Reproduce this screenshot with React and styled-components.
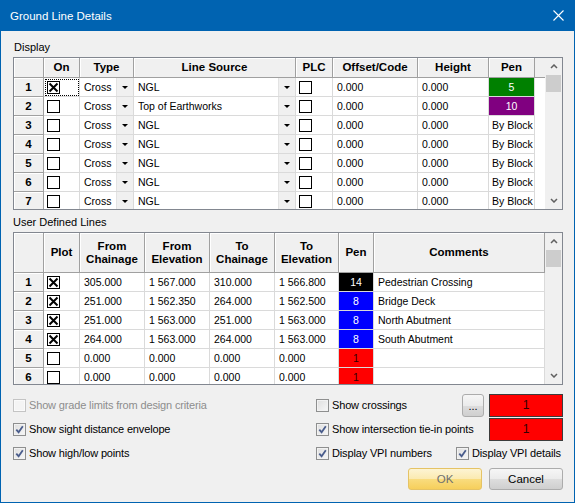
import React from 'react';
import styled, { createGlobalStyle } from 'styled-components';

const GlobalStyle = createGlobalStyle`
  html, body {
    margin: 0;
    padding: 0;
    background: #f0f0f0;
  }
  body {
    font-family: "Liberation Sans", Arial, sans-serif;
    font-size: 10.5px;
    color: #000;
  }
  * {
    box-sizing: border-box;
  }
`;

const Window = styled.div`
  width: 575px;
  height: 503px;
  display: flex;
  flex-direction: column;
  background: #f0f0f0;
  border: 1px solid #0063b1;
  border-top: none;
`;
const TitleBar = styled.div`
  height: 31px;
  margin: 0 -1px;
  padding: 0 11px 0 10px;
  display: flex;
  align-items: center;
  justify-content: space-between;
  background: #0063b1;
  color: #fff;
  font-size: 11.5px;
`;
const Body = styled.div`
  flex: 1;
  display: flex;
  flex-direction: column;
  padding: 0 11px 0 12px;
`;
const SectionLabel = styled.div`
  height: 14px;
  line-height: 14px;
  font-size: 11px;
  margin-top: ${({ $top }) => $top}px;
  padding-left: ${({ $indent }) => $indent || 0}px;
`;
const Frame = styled.div`
  height: 153px;
  margin-top: 3px;
  display: flex;
  border: 1px solid #828790;
  background: #fff;
  overflow: hidden;
`;
const Table = styled.div`
  flex: 1;
  display: grid;
  grid-template-columns: ${({ $cols }) => $cols};
  grid-template-rows: ${({ $head }) => $head}px;
  grid-auto-rows: 19px;
  overflow: hidden;
`;
const Cell = styled.div`
  display: flex;
  align-items: center;
  justify-content: ${({ $center }) => ($center ? 'center' : 'flex-start')};
  padding: 0 ${({ $pad }) => ($pad === undefined ? 4 : $pad)}px;
  border-right: 1px solid #dadada;
  border-bottom: 1px solid #dadada;
  background: ${({ $bg }) => $bg || '#fff'};
  color: ${({ $fg }) => $fg || '#000'};
  white-space: nowrap;
  overflow: hidden;
  outline: ${({ $focus }) => ($focus ? '1px dotted #000' : 'none')};
  outline-offset: -2px;
`;
const FillCell = styled.div`
  background: ${({ $head }) => ($head ? '#f0f0f0' : '#fff')};
  border-bottom: ${({ $head }) => ($head ? '1px solid #a0a0a0' : 'none')};
`;
const HeadCell = styled.div`
  display: flex;
  align-items: center;
  justify-content: center;
  text-align: center;
  font-weight: bold;
  font-size: 11.5px;
  line-height: 13px;
  background: #f0f0f0;
  border-right: 1px solid #a0a0a0;
  border-bottom: 1px solid #a0a0a0;
  box-shadow: inset 1px 1px 0 #fff;
  white-space: nowrap;
  overflow: hidden;
`;
const ComboCell = styled.div`
  display: flex;
  align-items: stretch;
  border-right: 1px solid #dadada;
  border-bottom: 1px solid #dadada;
  background: #fff;
  overflow: hidden;
`;
const ComboText = styled.span`
  flex: 1;
  display: flex;
  align-items: center;
  padding-left: 4px;
  white-space: nowrap;
`;
const DropButton = styled.span`
  width: 17px;
  display: flex;
  align-items: center;
  justify-content: center;
  background: #f0f0f0;
  border-left: 1px solid #e3e3e3;
  &::after {
    content: '';
    border-left: 3px solid transparent;
    border-right: 3px solid transparent;
    border-top: 3px solid #000;
  }
`;
const GridBox = styled.span`
  width: 13px;
  height: 13px;
  display: flex;
  align-items: center;
  justify-content: center;
  border: 1px solid #000;
  background: #fff;
`;
const ScrollBar = styled.div`
  width: 17px;
  flex-shrink: 0;
  display: flex;
  flex-direction: column;
  background: #f0f0f0;
`;
const ScrollArrow = styled.div`
  height: 17px;
  display: flex;
  align-items: center;
  justify-content: center;
`;
const Thumb = styled.div`
  height: 17px;
  margin: 0 1px;
  background: #cdcdcd;
`;
const Track = styled.div`
  flex: 1;
`;
const Options = styled.div`
  margin-top: 8px;
  display: grid;
  grid-template-columns: 303px 1fr;
  grid-auto-rows: 24px;
  font-size: 11px;
`;
const OptionRow = styled.div`
  display: flex;
  align-items: center;
`;
const CheckLabel = styled.label`
  display: flex;
  align-items: center;
  gap: 3px;
  width: ${({ $width }) => ($width ? `${$width}px` : 'auto')};
  flex: ${({ $grow }) => ($grow ? 1 : 'none')};
  color: ${({ $disabled }) => ($disabled ? '#8d8d8d' : '#000')};
  white-space: nowrap;
  letter-spacing: -0.15px;
`;
const ThemedBox = styled.span`
  width: 13px;
  height: 13px;
  display: flex;
  align-items: center;
  justify-content: center;
  border: 1px solid ${({ $disabled }) => ($disabled ? '#c4c4c4' : '#8e8f8f')};
  background: ${({ $disabled }) =>
    $disabled ? '#f4f4f4' : 'linear-gradient(135deg, #dedede 0%, #f7f7f7 100%)'};
  box-shadow: inset 0 0 0 1px ${({ $disabled }) => ($disabled ? '#fafafa' : '#f2f2f2')};
`;
const DotsButton = styled.button`
  width: 22px;
  height: 23px;
  padding: 0 0 4px;
  margin-right: 5px;
  display: flex;
  align-items: flex-end;
  justify-content: center;
  font-family: inherit;
  font-size: 11px;
  border: 1px solid #acacac;
  border-radius: 3px;
  background: linear-gradient(#f6f6f6 0%, #ebebeb 50%, #dddddd 51%, #cfcfcf 100%);
`;
const PenSwatch = styled.div`
  width: 74px;
  height: 23px;
  display: flex;
  align-items: center;
  justify-content: center;
  background: #ff0000;
  border: 1px solid #3c3c3c;
  color: #300;
  font-size: 12px;
`;
const ButtonRow = styled.div`
  margin-top: 3px;
  display: flex;
  justify-content: flex-end;
  gap: 7px;
`;
const DialogButton = styled.button`
  width: 74px;
  height: 22px;
  padding: 0;
  font-family: inherit;
  font-size: 11.5px;
  border-radius: 3px;
  border: 1px solid ${({ $primary }) => ($primary ? '#e5c365' : '#acacac')};
  color: ${({ $primary }) => ($primary ? '#6f6f6f' : '#000')};
  background: ${({ $primary }) =>
    $primary
      ? 'linear-gradient(#fdf4d3 0%, #fbeab0 50%, #f9dc7e 51%, #f6cf5c 100%)'
      : 'linear-gradient(#f6f6f6 0%, #ebebeb 50%, #dddddd 51%, #cfcfcf 100%)'};
`;

const XMark = () => (
  <svg width="11" height="11" viewBox="0 0 11 11">
    <path d="M1.5 1.5L9.5 9.5M9.5 1.5L1.5 9.5" stroke="#000" strokeWidth="2" />
  </svg>
);

const GridCheck = ({ checked, focus }) => (
  <Cell $pad={3} $focus={focus}>
    <GridBox>{checked && <XMark />}</GridBox>
  </Cell>
);

const Combo = ({ text }) => (
  <ComboCell>
    <ComboText>{text}</ComboText>
    <DropButton />
  </ComboCell>
);

const Chevron = ({ down }) => (
  <svg width="8" height="5" viewBox="0 0 8 5">
    <path
      d={down ? 'M1 1L4 4L7 1' : 'M1 4L4 1L7 4'}
      fill="none"
      stroke="#606060"
      strokeWidth="1.5"
    />
  </svg>
);

const Scroller = () => (
  <ScrollBar>
    <ScrollArrow>
      <Chevron />
    </ScrollArrow>
    <Thumb />
    <Track />
    <ScrollArrow>
      <Chevron down />
    </ScrollArrow>
  </ScrollBar>
);

const Check = ({ label, checked, disabled, width, grow }) => (
  <CheckLabel $disabled={disabled} $width={width} $grow={grow}>
    <ThemedBox $disabled={disabled}>
      {checked && (
        <svg width="9" height="9" viewBox="0 0 9 9">
          <path d="M1.3 4.6L3.6 7.2L7.8 1.2" fill="none" stroke="#4a5d8c" strokeWidth="1.8" />
        </svg>
      )}
    </ThemedBox>
    {label}
  </CheckLabel>
);

const displayRows = [
  { source: 'Top of Earthworks', pen: '10', bg: '#800080' },
  { source: 'NGL' },
  { source: 'NGL' },
  { source: 'NGL' },
  { source: 'NGL' },
  { source: 'NGL' },
];

const userRows = [
  { plot: true, fc: '305.000', fe: '1 567.000', tc: '310.000', te: '1 566.800', pen: '14', bg: '#000', fg: '#fff', note: 'Pedestrian Crossing' },
  { plot: true, fc: '251.000', fe: '1 562.350', tc: '264.000', te: '1 562.500', pen: '8', bg: '#0000ff', fg: '#fff', note: 'Bridge Deck' },
  { plot: true, fc: '251.000', fe: '1 563.000', tc: '251.000', te: '1 563.000', pen: '8', bg: '#0000ff', fg: '#fff', note: 'North Abutment' },
  { plot: true, fc: '264.000', fe: '1 563.000', tc: '264.000', te: '1 563.000', pen: '8', bg: '#0000ff', fg: '#fff', note: 'South Abutment' },
  { plot: false, fc: '0.000', fe: '0.000', tc: '0.000', te: '0.000', pen: '1', bg: '#ff0000', fg: '#300', note: '' },
  { plot: false, fc: '0.000', fe: '0.000', tc: '0.000', te: '0.000', pen: '1', bg: '#ff0000', fg: '#300', note: '' },
];

const DisplayGrid = () => (
  <Frame>
    <Table $cols="30px 36px 54px 162px 37px 85px 71px 46px 1fr" $head={20}>
      <HeadCell />
      <HeadCell>On</HeadCell>
      <HeadCell>Type</HeadCell>
      <HeadCell>Line Source</HeadCell>
      <HeadCell>PLC</HeadCell>
      <HeadCell>Offset/Code</HeadCell>
      <HeadCell>Height</HeadCell>
      <HeadCell>Pen</HeadCell>
      <FillCell $head />

      <HeadCell>1</HeadCell>
      <GridCheck checked focus />
      <Combo text="Cross" />
      <Combo text="NGL" />
      <GridCheck />
      <Cell>0.000</Cell>
      <Cell>0.000</Cell>
      <Cell $center $bg="#008000" $fg="#fff">5</Cell>
      <FillCell />

      {displayRows.map((row, i) => (
        <React.Fragment key={i}>
          <HeadCell>{i + 2}</HeadCell>
          <GridCheck />
          <Combo text="Cross" />
          <Combo text={row.source} />
          <GridCheck />
          <Cell>0.000</Cell>
          <Cell>0.000</Cell>
          {row.pen ? (
            <Cell $center $bg={row.bg} $fg="#fff">{row.pen}</Cell>
          ) : (
            <Cell $pad={3}>By Block</Cell>
          )}
          <FillCell />
        </React.Fragment>
      ))}
    </Table>
    <Scroller />
  </Frame>
);

const UserGrid = () => (
  <Frame>
    <Table $cols="30px 36px 65px 65px 65px 64px 35px 1fr" $head={40}>
      <HeadCell />
      <HeadCell>Plot</HeadCell>
      <HeadCell>From<br />Chainage</HeadCell>
      <HeadCell>From<br />Elevation</HeadCell>
      <HeadCell>To<br />Chainage</HeadCell>
      <HeadCell>To<br />Elevation</HeadCell>
      <HeadCell>Pen</HeadCell>
      <HeadCell>Comments</HeadCell>
      {userRows.map((row, i) => (
        <React.Fragment key={i}>
          <HeadCell>{i + 1}</HeadCell>
          <GridCheck checked={row.plot} />
          <Cell>{row.fc}</Cell>
          <Cell>{row.fe}</Cell>
          <Cell>{row.tc}</Cell>
          <Cell>{row.te}</Cell>
          <Cell $center $bg={row.bg} $fg={row.fg}>{row.pen}</Cell>
          <Cell>{row.note}</Cell>
        </React.Fragment>
      ))}
    </Table>
    <Scroller />
  </Frame>
);

const App = () => (
  <>
    <GlobalStyle />
    <Window>
      <TitleBar>
        <span>Ground Line Details</span>
        <svg width="11" height="11" viewBox="0 0 11 11">
          <path d="M0.5 0.5L10.5 10.5M10.5 0.5L0.5 10.5" stroke="#fff" strokeWidth="1.1" />
        </svg>
      </TitleBar>
      <Body>
        <SectionLabel $top={9} $indent={1}>Display</SectionLabel>
        <DisplayGrid />
        <SectionLabel $top={5}>User Defined Lines</SectionLabel>
        <UserGrid />
        <Options>
          <OptionRow>
            <Check label="Show grade limits from design criteria" disabled />
          </OptionRow>
          <OptionRow>
            <Check label="Show crossings" grow />
            <DotsButton>...</DotsButton>
            <PenSwatch>1</PenSwatch>
          </OptionRow>
          <OptionRow>
            <Check label="Show sight distance envelope" checked />
          </OptionRow>
          <OptionRow>
            <Check label="Show intersection tie-in points" checked grow />
            <PenSwatch>1</PenSwatch>
          </OptionRow>
          <OptionRow>
            <Check label="Show high/low points" checked />
          </OptionRow>
          <OptionRow>
            <Check label="Display VPI numbers" checked width={140} />
            <Check label="Display VPI details" checked />
          </OptionRow>
        </Options>
        <ButtonRow>
          <DialogButton $primary>OK</DialogButton>
          <DialogButton>Cancel</DialogButton>
        </ButtonRow>
      </Body>
    </Window>
  </>
);

export default App;
